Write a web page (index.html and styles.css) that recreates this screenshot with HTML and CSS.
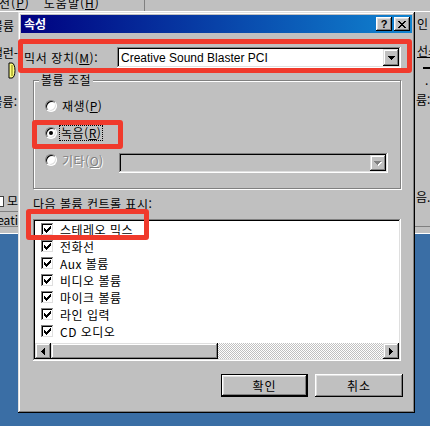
FILE: index.html
```html
<!DOCTYPE html>
<html lang="ko">
<head>
    <meta charset="UTF-8">
    <meta name="viewport" content="width=device-width, initial-scale=1.0">
    <title>속성</title>
    <link rel="stylesheet" href="styles.css">
</head>
<body>
    <div class="desktop">
        <!-- window behind the dialog -->
        <div class="bg-window">
            <div class="bg-menu">
                <span class="bg-menu-item">옵션(<u>P</u>)</span>
                <span class="bg-menu-item">도움말(<u>H</u>)</span>
                <span class="bg-menu-sep"></span>
            </div>
            <div class="bg-main">
                <div class="bg-col bg-left">
                    <span class="bg-text t1">볼륨</span>
                    <span class="bg-text t2">밸런-</span>
                    <svg class="bg-knob" width="8" height="17" viewBox="0 0 8 17">
                        <path d="M1 1h3a3 7.5 0 0 1 0 15h-3z" fill="#ffff80" stroke="#000"/>
                        <path d="M4 3v11" stroke="#808000"/>
                    </svg>
                    <span class="bg-text t3">볼륨:</span>
                    <span class="bg-text t4"><i class="bg-check"></i>모</span>
                    <span class="bg-text t5">Creati</span>
                </div>
                <div class="bg-col bg-right">
                    <span class="bg-text r1">인 입</span>
                    <span class="bg-text r2">선스</span>
                    <span class="bg-dash"></span>
                    <span class="bg-text r3">·</span>
                    <span class="bg-text r4">륨:</span>
                    <span class="bg-text r5">음.</span>
                </div>
            </div>
        </div>

        <div class="dialog">
            <div class="titlebar">
                <span class="title">속성</span>
                <span class="title-btn help">?</span>
                <span class="title-btn close">
                    <svg width="8" height="7" viewBox="0 0 8 7" shape-rendering="crispEdges">
                        <path d="M0 0h2v1h-2zM6 0h2v1h-2zM1 1h2v1h-2zM5 1h2v1h-2zM2 2h4v1h-4zM3 3h2v1h-2zM2 4h4v1h-4zM1 5h2v1h-2zM5 5h2v1h-2zM0 6h2v1h-2zM6 6h2v1h-2z" fill="#000"/>
                    </svg>
                </span>
            </div>

            <div class="dialog-body">
                <div class="mixer-row">
                    <span class="mixer-label">믹서 장치(<u>M</u>):</span>
                    <div class="combo">
                        <span class="combo-text">Creative Sound Blaster PCI</span>
                        <span class="drop-btn">
                            <svg width="7" height="4" viewBox="0 0 7 4" shape-rendering="crispEdges">
                                <path d="M0 0h7v1h-7zM1 1h5v1h-5zM2 2h3v1h-3zM3 3h1v1h-1z" fill="#000"/>
                            </svg>
                        </span>
                    </div>
                </div>

                <div class="group">
                    <span class="group-title">볼륨 조절</span>
                    <div class="radio-row">
                        <span class="radio"></span>
                        <span class="radio-label">재생(<u>P</u>)</span>
                    </div>
                    <div class="radio-row">
                        <span class="radio checked"></span>
                        <span class="radio-label focus">녹음(<u>R</u>)</span>
                    </div>
                    <div class="radio-row other">
                        <span class="radio"></span>
                        <span class="radio-label disabled">기타(<u>O</u>)</span>
                        <div class="combo combo-disabled">
                            <span class="combo-text"></span>
                            <span class="drop-btn">
                                <svg width="8" height="5" viewBox="0 0 8 5" shape-rendering="crispEdges">
                                    <path d="M1 1h7v1h-7zM2 2h5v1h-5zM3 3h3v1h-3zM4 4h1v1h-1z" fill="#fff"/>
                                    <path d="M0 0h7v1h-7zM1 1h5v1h-5zM2 2h3v1h-3zM3 3h1v1h-1z" fill="#808080"/>
                                </svg>
                            </span>
                        </div>
                    </div>
                </div>

                <div class="list-label">다음 볼륨 컨트롤 표시:</div>

                <div class="listbox">
                    <div class="list-items">
                        <div class="list-item"><span class="check"></span>스테레오 믹스</div>
                        <div class="list-item"><span class="check"></span>전화선</div>
                        <div class="list-item"><span class="check"></span>Aux 볼륨</div>
                        <div class="list-item"><span class="check"></span>비디오 볼륨</div>
                        <div class="list-item"><span class="check"></span>마이크 볼륨</div>
                        <div class="list-item"><span class="check"></span>라인 입력</div>
                        <div class="list-item"><span class="check"></span>CD 오디오</div>
                    </div>
                    <div class="hscroll">
                        <span class="scroll-btn">
                            <svg width="4" height="7" viewBox="0 0 4 7" shape-rendering="crispEdges">
                                <path d="M3 0h1v7h-1zM2 1h1v5h-1zM1 2h1v3h-1zM0 3h1v1h-1z" fill="#000"/>
                            </svg>
                        </span>
                        <span class="scroll-thumb"></span>
                        <span class="scroll-track"></span>
                        <span class="scroll-btn">
                            <svg width="4" height="7" viewBox="0 0 4 7" shape-rendering="crispEdges">
                                <path d="M0 0h1v7h-1zM1 1h1v5h-1zM2 2h1v3h-1zM3 3h1v1h-1z" fill="#000"/>
                            </svg>
                        </span>
                    </div>
                </div>

                <div class="buttons">
                    <button class="btn default">확인</button>
                    <button class="btn">취소</button>
                </div>
            </div>

            <!-- red highlight marks -->
            <span class="mark mark-mixer"></span>
            <span class="mark mark-record"></span>
            <span class="mark mark-stereo"></span>
        </div>
    </div>
</body>
</html>
```

FILE: styles.css
```css
body {
    margin: 0;
    width: 430px;
    height: 426px;
    overflow: hidden;
    background-color: #3a6ea5;
    font-family: "Noto Sans CJK KR", "Liberation Sans", sans-serif;
    font-size: 12px;
    color: #000;
}
.desktop {
    position: relative;
    width: 430px;
    height: 426px;
}

/* background window */
.bg-window {
    position: absolute;
    left: 0;
    top: 0;
    width: 430px;
    height: 234px;
    background-color: #c0c0c0;
    box-shadow: inset 0 -1px #fff, inset 0 -7px #c0c0c0, inset 0 -8px #808080;
    overflow: hidden;
}
.bg-menu {
    height: 11px;
    border-bottom: 1px solid #fff;
    display: flex;
    align-items: flex-end;
    overflow: hidden;
}
.bg-menu-item {
    line-height: 14px;
    margin-bottom: 1px;
    white-space: nowrap;
    letter-spacing: 1px;
}
.bg-menu-item:first-child {
    margin-left: -13px;
    margin-right: 14px;
}
.bg-menu-sep {
    width: 1px;
    height: 11px;
    background-color: #808080;
    margin-left: 44px;
}
.bg-main {
    display: flex;
    justify-content: space-between;
}
.bg-col {
    display: flex;
    flex-direction: column;
    overflow: hidden;
}
.bg-left {
    width: 18px;
    align-items: flex-end;
}
.bg-right {
    width: 15px;
    align-items: flex-start;
}
.bg-text {
    line-height: 14px;
    white-space: nowrap;
}
.bg-left .bg-text {
    margin-right: 4px;
}
.t1 { margin-top: 7px; }
.t2 { margin-top: 13px; margin-right: 0 !important; }
.bg-knob { margin-top: 2px; margin-right: 2px; }
.t3 { margin-top: 16px; margin-right: 1px !important; }
.t4 { margin-top: 85px; margin-right: 0 !important; display: flex; align-items: center; gap: 3px; }
.bg-check {
    width: 9px;
    height: 9px;
    background-color: #fff;
    border: 1px solid #404040;
}
.t5 {
    margin-top: 3px;
    margin-right: 0 !important;
    border-top: 1px solid #808080;
    padding-top: 1px;
}
.r1 { margin-top: 5px; margin-left: 2px; }
.r2 { margin-top: 13px; margin-left: 2px; text-decoration: underline; }
.bg-dash {
    width: 10px;
    height: 2px;
    background-color: #000;
    margin: 9px 0 0 8px;
}
.r3 { margin-top: 8px; margin-left: 10px; }
.r4 { margin-top: 2px; margin-left: 1px; }
.r5 { margin-top: 83px; margin-left: 1px; }

/* dialog */
.dialog {
    position: absolute;
    left: 18px;
    top: 12px;
    width: 397px;
    height: 401px;
    box-sizing: border-box;
    padding: 3px;
    background-color: #c0c0c0;
    box-shadow: inset -1px -1px #000, inset 1px 1px #dfdfdf, inset -2px -2px #808080, inset 2px 2px #fff;
    display: flex;
    flex-direction: column;
}
.titlebar {
    height: 18px;
    background: linear-gradient(90deg, #000080, #1084d0);
    display: flex;
    align-items: center;
    padding: 0 2px 0 3px;
}
.title {
    flex: 1;
    color: #fff;
    font-weight: bold;
    line-height: 16px;
}
.title-btn {
    width: 16px;
    height: 14px;
    background-color: #c0c0c0;
    box-shadow: inset -1px -1px #000, inset 1px 1px #fff, inset -2px -2px #808080, inset 2px 2px #dfdfdf;
    display: flex;
    align-items: center;
    justify-content: center;
}
.title-btn + .title-btn {
    margin-left: 2px;
}
.help {
    font-family: "Liberation Sans", sans-serif;
    font-weight: bold;
    font-size: 11px;
    line-height: 14px;
}
.dialog-body {
    flex: 1;
    display: flex;
    flex-direction: column;
    padding: 14px 11px 0 3px;
}

.mixer-row {
    display: flex;
    align-items: center;
}
.mixer-label {
    flex: 1;
    letter-spacing: 0.6px;
}
.combo {
    width: 284px;
    height: 21px;
    box-sizing: border-box;
    padding: 2px;
    background-color: #fff;
    box-shadow: inset -1px -1px #fff, inset 1px 1px #808080, inset -2px -2px #dfdfdf, inset 2px 2px #000;
    display: flex;
    align-items: center;
}
.combo-text {
    flex: 1;
    padding-left: 2px;
    font-family: "Liberation Sans", sans-serif;
    font-size: 12px;
}
.drop-btn {
    width: 16px;
    height: 17px;
    background-color: #c0c0c0;
    box-shadow: inset -1px -1px #000, inset 1px 1px #dfdfdf, inset -2px -2px #808080, inset 2px 2px #fff;
    display: flex;
    align-items: center;
    justify-content: center;
}

.group {
    margin: 12px 0 0 9px;
    height: 109px;
    box-sizing: border-box;
    border: 1px solid #808080;
    box-shadow: inset 1px 1px #fff, 1px 1px #fff;
    display: flex;
    flex-direction: column;
}
.group-title {
    align-self: flex-start;
    margin: -9px 0 0 5px;
    padding: 0 2px;
    line-height: 16px;
    background-color: #c0c0c0;
    letter-spacing: 0.5px;
}
.radio-row {
    display: flex;
    align-items: center;
    height: 20px;
    padding-left: 11px;
    margin-top: 7px;
}
.radio-row:nth-child(2) {
    margin-top: 8px;
}
.radio-row.other {
    height: 24px;
    align-items: flex-start;
}
.radio-row.other .radio,
.radio-row.other .radio-label {
    margin-top: 4px;
}
.radio {
    width: 12px;
    height: 12px;
    box-sizing: border-box;
    border-radius: 50%;
    background-color: #fff;
    border: 1px solid;
    border-color: #808080 #fff #fff #808080;
    box-shadow: inset 1px 1px #000, inset -1px -1px #dfdfdf;
    display: flex;
    align-items: center;
    justify-content: center;
}
.radio.checked::after {
    content: "";
    width: 4px;
    height: 4px;
    border-radius: 50%;
    background-color: #000;
}
.radio-label {
    margin-left: 5px;
    line-height: 14px;
    letter-spacing: 0.5px;
}
.radio-label.focus {
    outline: 1px dotted #000;
    margin-left: 3px;
    padding: 0 1px;
}
.radio-label.disabled {
    color: #808080;
    text-shadow: 1px 1px #fff;
}
.combo-disabled {
    width: 269px;
    height: 20px;
    margin: 3px 12px 0 auto;
    background-color: #c0c0c0;
}
.combo-disabled .drop-btn {
    height: 16px;
}

.list-label {
    margin: 7px 0 0 9px;
    line-height: 16px;
    letter-spacing: 0.5px;
}
.listbox {
    margin: 7px 0 0 9px;
    height: 142px;
    box-sizing: border-box;
    padding: 2px;
    background-color: #fff;
    box-shadow: inset -1px -1px #fff, inset 1px 1px #808080, inset -2px -2px #dfdfdf, inset 2px 2px #000;
    display: flex;
    flex-direction: column;
}
.list-items {
    flex: 1;
}
.list-item {
    height: 17px;
    display: flex;
    align-items: center;
    padding-left: 6px;
    letter-spacing: 0.5px;
}
.check {
    width: 13px;
    height: 13px;
    box-sizing: border-box;
    margin-right: 6px;
    background: #fff url("data:image/svg+xml,%3Csvg xmlns='http://www.w3.org/2000/svg' width='7' height='7' shape-rendering='crispEdges'%3E%3Cpath d='M6 0h1v1h-1zM5 1h2v1h-2zM0 2h1v1h-1zM4 2h3v1h-3zM0 3h2v1h-2zM3 3h3v1h-3zM0 4h5v1h-5zM1 5h3v1h-3zM2 6h1v1h-1z'/%3E%3C/svg%3E") no-repeat 3px 3px;
    box-shadow: inset -1px -1px #fff, inset 1px 1px #808080, inset -2px -2px #dfdfdf, inset 2px 2px #000;
}
.hscroll {
    height: 16px;
    display: flex;
}
.scroll-btn {
    width: 16px;
    height: 16px;
    background-color: #c0c0c0;
    box-shadow: inset -1px -1px #000, inset 1px 1px #dfdfdf, inset -2px -2px #808080, inset 2px 2px #fff;
    display: flex;
    align-items: center;
    justify-content: center;
}
.scroll-thumb {
    width: 167px;
    background-color: #c0c0c0;
    box-shadow: inset -1px -1px #000, inset 1px 1px #dfdfdf, inset -2px -2px #808080, inset 2px 2px #fff;
}
.scroll-track {
    flex: 1;
    background-image: repeating-conic-gradient(#c0c0c0 0 25%, #fff 0 50%);
    background-size: 2px 2px;
}

.buttons {
    display: flex;
    justify-content: flex-end;
    gap: 7px;
    margin: 13px -2px 0 0;
}
.btn {
    width: 88px;
    height: 23px;
    padding: 0;
    border: none;
    background-color: #c0c0c0;
    font-family: "Noto Sans CJK KR", sans-serif;
    font-size: 12px;
    letter-spacing: 1px;
    color: #000;
    box-shadow: inset -1px -1px #000, inset 1px 1px #fff, inset -2px -2px #808080, inset 2px 2px #dfdfdf;
}
.btn.default {
    width: 87px;
    box-shadow: inset 0 0 0 1px #000, inset -2px -2px #000, inset 2px 2px #fff, inset -3px -3px #808080, inset 3px 3px #dfdfdf;
}

/* red annotation boxes */
.mark {
    position: absolute;
    box-sizing: border-box;
    border: 5px solid #f03a2c;
    border-radius: 3px;
}
.mark-mixer {
    left: 0;
    top: 27px;
    width: 394px;
    height: 34px;
}
.mark-record {
    left: 14px;
    top: 108px;
    width: 91px;
    height: 29px;
}
.mark-stereo {
    left: 8px;
    top: 197px;
    width: 123px;
    height: 31px;
}
```
